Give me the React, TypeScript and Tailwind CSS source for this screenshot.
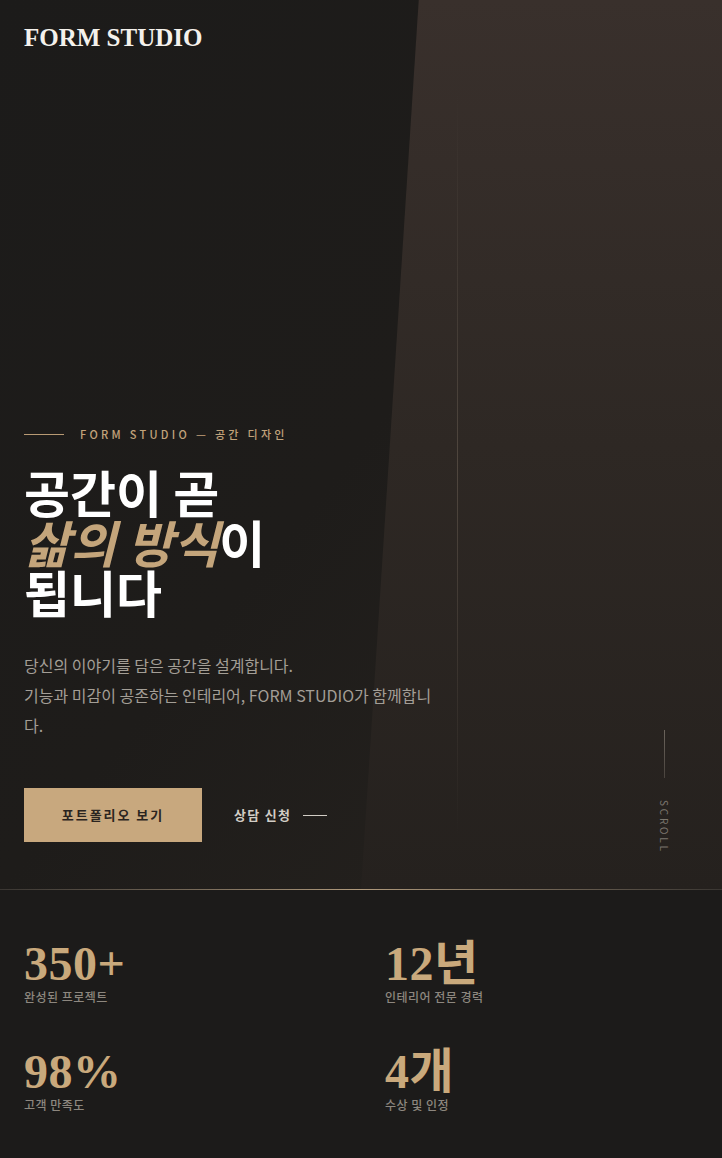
import React from "react";

const sans = "font-['Noto_Sans_CJK_KR','Noto_Sans',sans-serif]";
const serif = "font-['Liberation_Serif','Noto_Sans_CJK_KR',serif]";

const stats = [
  { value: "350+", label: "완성된 프로젝트" },
  { value: "12년", label: "인테리어 전문 경력" },
  { value: "98%", label: "고객 만족도" },
  { value: "4개", label: "수상 및 인정" },
];

const App: React.FC = () => {
  return (
    <div className={`min-h-[1158px] w-full bg-[#1c1b1a] ${sans}`}>
      {/* Hero */}
      <section className="relative h-[889px] overflow-hidden bg-gradient-to-br from-[#1c1b1a] via-[#1e1c1a] to-[#27231f]">
        {/* angled panel */}
        <div className="absolute right-0 top-0 h-full w-1/2 bg-gradient-to-b from-[#39302c] via-[#2e2824] to-[#25211e] [clip-path:polygon(16%_0,100%_0,100%_100%,0_100%)]" />
        {/* thin vertical line */}
        <div className="absolute left-[457px] top-[95px] h-[740px] w-px bg-gradient-to-b from-transparent via-[#4f463e] to-transparent" />

        <div className="relative flex h-full flex-col px-6">
          <header className="pt-6">
            <div className="font-['Liberation_Serif',serif] text-[25px] font-bold leading-[28px] text-[#f4f1ec]">
              FORM STUDIO
            </div>
          </header>

          <div className="mt-auto pb-[47px]">
            <div className="flex items-center gap-4">
              <span className="h-px w-10 bg-[#b89a74]" />
              <span className="text-[11px] font-medium leading-4 tracking-[0.3em] text-[#c2a37a]">
                FORM STUDIO — 공간 디자인
              </span>
            </div>

            <h1 className="mt-[24px] text-[50px] font-bold leading-[50px] text-white">
              공간이 곧
              <br />
              <span className="italic text-[#c4a57b]">삶의 방식</span>이
              <br />
              됩니다
            </h1>

            <p className="mt-[34px] max-w-[418px] text-[16px] leading-[30px] text-[#a39e96]">
              당신의 이야기를 담은 공간을 설계합니다.
              <br />
              기능과 미감이 공존하는 인테리어, FORM STUDIO가 함께합니다.
            </p>

            <div className="mt-12 flex items-center gap-8">
              <button className="flex h-[54px] w-[178px] items-center justify-center bg-[#c8a87e] text-[13px] font-bold tracking-[0.15em] text-[#2a2420]">
                포트폴리오 보기
              </button>
              <button className="flex items-center gap-3 text-[13px] font-bold tracking-[0.1em] text-[#d2cdc5]">
                상담 신청
                <span className="h-px w-6 bg-[#d2cdc5]" />
              </button>
            </div>
          </div>
        </div>

        {/* scroll indicator */}
        <div className="absolute right-[52px] top-[730px] flex w-3 flex-col items-center gap-[22px]">
          <span className="h-12 w-px bg-gradient-to-b from-[#6b645c] to-[#4a443e]" />
          <span className="text-[10px] leading-3 tracking-[0.28em] text-[#7c766e] [writing-mode:vertical-rl]">
            SCROLL
          </span>
        </div>
      </section>

      {/* Stats */}
      <section className="relative bg-[#1c1b1a]">
        <div className="h-px w-full bg-gradient-to-r from-[#3a3632] via-[#b09a7c] to-[#3a3632]" />
        <div className="grid grid-cols-2 gap-x-12 gap-y-[42px] px-6 pb-12 pt-[50px]">
          {stats.map((s) => (
            <div key={s.label}>
              <div className={`${serif} text-[48px] font-bold leading-[48px] tracking-[0.01em] text-[#c9a97c]`}>
                {s.value}
              </div>
              <div className="text-[12px] font-medium leading-[18px] tracking-[0.04em] text-[#8d877f]">
                {s.label}
              </div>
            </div>
          ))}
        </div>
      </section>
    </div>
  );
};

export default App;
